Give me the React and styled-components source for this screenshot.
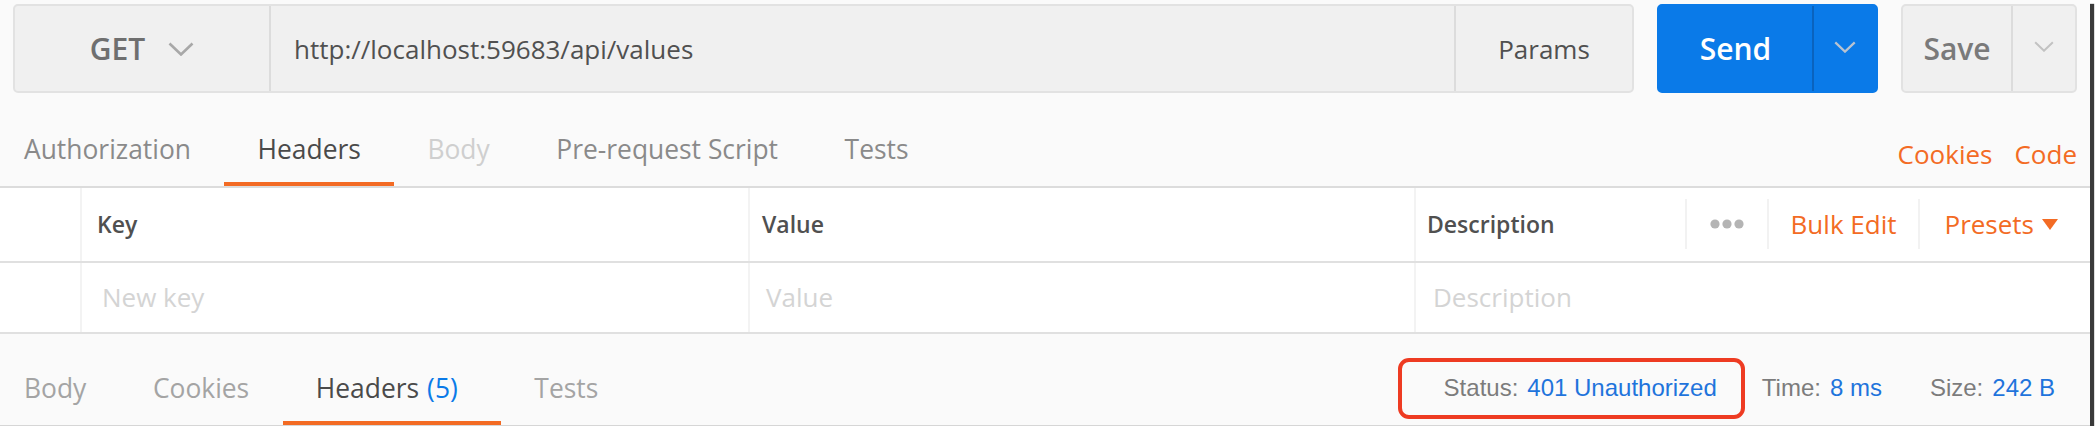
import React from "react";
import styled, { createGlobalStyle } from "styled-components";

const GlobalStyle = createGlobalStyle`
  html, body {
    margin: 0;
    padding: 0;
    background: #ffffff;
  }
  body {
    font-family: "Open Sans", "Noto Sans", sans-serif;
  }
`;

const ORANGE = "#f36b24";
const BLUE = "#0a7ae8";

const Frame = styled.div`
  width: 2090px;
  height: 426px;
  box-sizing: border-box;
  background: #fafafa;
  border-bottom: 1px solid #d6d6d6;
  box-shadow: 4px 4px 1px #3a3a3a;
  display: flex;
  flex-direction: column;
  overflow: hidden;
`;

/* request bar */

const RequestBar = styled.div`
  display: flex;
  gap: 23px;
  height: 94px;
  padding: 4px 13px 0;
  box-sizing: border-box;
`;

const UrlGroup = styled.div`
  flex: 1;
  display: flex;
  background: #f0f0f0;
  border: 2px solid #e2e2e2;
  border-radius: 5px;
`;

const Method = styled.div`
  width: 254px;
  display: flex;
  align-items: center;
  justify-content: center;
  gap: 23px;
  font-size: 30px;
  font-weight: 600;
  color: #6f6f6f;
  border-right: 2px solid #dcdcdc;
`;

const UrlText = styled.div`
  flex: 1;
  display: flex;
  align-items: center;
  padding-left: 23px;
  font-size: 26px;
  color: #505050;
`;

const Params = styled.div`
  width: 176px;
  display: flex;
  align-items: center;
  justify-content: center;
  font-size: 26px;
  color: #505050;
  border-left: 2px solid #dcdcdc;
`;

const SplitButton = styled.div`
  width: ${(p) => p.$width}px;
  display: flex;
  box-sizing: border-box;
  border-radius: 5px;
  background: ${(p) => (p.$primary ? BLUE : "#f0f0f0")};
  border: 2px solid ${(p) => (p.$primary ? BLUE : "#e2e2e2")};
`;

const ButtonLabel = styled.div`
  flex: 1;
  display: flex;
  align-items: center;
  justify-content: center;
  font-size: 30px;
  font-weight: 600;
  color: ${(p) => (p.$primary ? "#ffffff" : "#7a7a7a")};
`;

const ButtonArrow = styled.div`
  width: 64px;
  display: flex;
  align-items: center;
  justify-content: center;
  padding-bottom: 4px;
  box-sizing: border-box;
  border-left: 2px solid ${(p) => (p.$primary ? "#0a63be" : "#dcdcdc")};
`;

const Chevron = ({ color = "#a8a8a8", w = 26, h = 14 }) => (
  <svg width={w} height={h} viewBox="0 0 26 14">
    <polyline
      points="1.5,1.5 13,12.5 24.5,1.5"
      fill="none"
      stroke={color}
      strokeWidth="2.6"
    />
  </svg>
);

/* tabs */

const TabRow = styled.div`
  display: flex;
  justify-content: space-between;
  height: ${(p) => p.$height}px;
  box-sizing: border-box;
  border-bottom: ${(p) => (p.$line ? "2px solid #dcdcdc" : "none")};
`;

const TabList = styled.div`
  display: flex;
`;

const Tab = styled.div`
  display: flex;
  align-items: center;
  padding: 22px 33.3px 0;
  border-bottom: 4px solid ${(p) => (p.$active ? ORANGE : "transparent")};
  font-size: 26.4px;
  color: ${(p) => p.$color};
  white-space: nowrap;

  &:first-child {
    padding-left: 24px;
  }
`;

const Count = styled.span`
  color: ${BLUE};
  margin-left: 8px;
  margin-right: 10px;
`;

const LinkGroup = styled.div`
  display: flex;
  align-items: center;
  gap: 22px;
  padding: 28px 13px 0 0;
`;

const OrangeLink = styled.span`
  font-size: 26px;
  color: ${ORANGE};
`;

/* key / value table */

const TableRow = styled.div`
  display: grid;
  grid-template-columns: 80px 668px 666px 1fr;
  height: ${(p) => p.$height}px;
  background: #ffffff;
  border-bottom: 2px solid #e0e0e0;
`;

const Cell = styled.div`
  display: flex;
  align-items: center;
  padding-left: ${(p) => p.$pad}px;
  border-left: 2px solid #f3f3f3;
  font-size: ${(p) => (p.$head ? 23 : 26)}px;
  font-weight: ${(p) => (p.$head ? 600 : 400)};
  color: ${(p) => (p.$head ? "#505050" : "#d4d4d4")};

  &:first-child {
    border-left: none;
  }
`;

const CellLabel = styled.span`
  flex: 1;
`;

const Action = styled.div`
  height: 50px;
  display: flex;
  align-items: center;
  justify-content: center;
  gap: 8px;
  padding: 0 ${(p) => p.$pad}px;
  border-left: 2px solid #f2f2f2;
  font-size: 26px;
  font-weight: 400;
  color: ${ORANGE};
`;

const Dots = () => (
  <svg width="34" height="12" viewBox="0 0 34 12">
    <circle cx="5" cy="6" r="4.6" fill="#b4b4b4" />
    <circle cx="17" cy="6" r="4.6" fill="#b4b4b4" />
    <circle cx="29" cy="6" r="4.6" fill="#b4b4b4" />
  </svg>
);

const Caret = () => (
  <svg width="16" height="12" viewBox="0 0 16 12">
    <polygon points="0,1 16,1 8,12" fill={ORANGE} />
  </svg>
);

/* response bar */

const StatusBar = styled.div`
  display: flex;
  align-items: center;
  gap: 17px;
  padding: 18px 35px 0 0;
  font-family: "Liberation Sans", Arial, sans-serif;
  font-size: 24px;
`;

const Metrics = styled.div`
  display: flex;
  gap: 48px;
`;

const Metric = styled.div`
  display: flex;
  align-items: center;
  white-space: nowrap;
  ${(p) =>
    p.$boxed &&
    `
    height: 61px;
    box-sizing: border-box;
    padding: 0 24px 0 42px;
    border: 4px solid #ee3b22;
    border-radius: 11px;
  `}
`;

const MetricLabel = styled.span`
  color: #7c7c7c;
`;

const MetricValue = styled.span`
  color: #1f74dc;
  margin-left: 9px;
`;

const requestTabs = [
  { label: "Authorization", color: "#8a8a8a" },
  { label: "Headers", color: "#4a4a4a", active: true },
  { label: "Body", color: "#cfcfcf" },
  { label: "Pre-request Script", color: "#8a8a8a" },
  { label: "Tests", color: "#8a8a8a" },
];

const responseTabs = [
  { label: "Body", color: "#a4a4a4" },
  { label: "Cookies", color: "#a4a4a4" },
  { label: "Headers", color: "#4a4a4a", active: true, count: 5 },
  { label: "Tests", color: "#a4a4a4" },
];

const App = () => (
  <>
    <GlobalStyle />
    <Frame>
      <RequestBar>
        <UrlGroup>
          <Method>
            GET
            <Chevron />
          </Method>
          <UrlText>http://localhost:59683/api/values</UrlText>
          <Params>Params</Params>
        </UrlGroup>
        <SplitButton $primary $width={221}>
          <ButtonLabel $primary>Send</ButtonLabel>
          <ButtonArrow $primary>
            <Chevron color="#b9c3d0" w={22} h={12} />
          </ButtonArrow>
        </SplitButton>
        <SplitButton $width={176}>
          <ButtonLabel>Save</ButtonLabel>
          <ButtonArrow>
            <Chevron color="#c2c2c2" w={20} h={11} />
          </ButtonArrow>
        </SplitButton>
      </RequestBar>

      <TabRow $height={96} $line>
        <TabList>
          {requestTabs.map((t) => (
            <Tab key={t.label} $active={t.active} $color={t.color}>
              {t.label}
            </Tab>
          ))}
        </TabList>
        <LinkGroup>
          <OrangeLink>Cookies</OrangeLink>
          <OrangeLink>Code</OrangeLink>
        </LinkGroup>
      </TabRow>

      <TableRow $height={73}>
        <Cell />
        <Cell $head $pad={15}>Key</Cell>
        <Cell $head $pad={12}>Value</Cell>
        <Cell $head $pad={11}>
          <CellLabel>Description</CellLabel>
          <Action $pad={23}>
            <Dots />
          </Action>
          <Action $pad={22}>Bulk Edit</Action>
          <Action $pad={24}>
            Presets
            <Caret />
          </Action>
          <span style={{ width: 8 }} />
        </Cell>
      </TableRow>
      <TableRow $height={70}>
        <Cell />
        <Cell $pad={20}>New key</Cell>
        <Cell $pad={16}>Value</Cell>
        <Cell $pad={17}>Description</Cell>
      </TableRow>

      <TabRow $height={92}>
        <TabList>
          {responseTabs.map((t) => (
            <Tab key={t.label} $active={t.active} $color={t.color}>
              {t.label}
              {t.count && <Count>({t.count})</Count>}
            </Tab>
          ))}
        </TabList>
        <StatusBar>
          <Metric $boxed>
            <MetricLabel>Status:</MetricLabel>
            <MetricValue>401 Unauthorized</MetricValue>
          </Metric>
          <Metrics>
            <Metric>
              <MetricLabel>Time:</MetricLabel>
              <MetricValue>8 ms</MetricValue>
            </Metric>
            <Metric>
              <MetricLabel>Size:</MetricLabel>
              <MetricValue>242 B</MetricValue>
            </Metric>
          </Metrics>
        </StatusBar>
      </TabRow>
    </Frame>
  </>
);

export default App;
